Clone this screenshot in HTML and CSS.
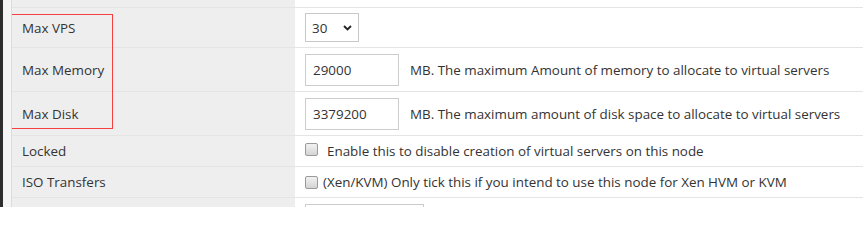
FILE: index.html
```html
<!DOCTYPE html>
<html>
<head>
<meta charset="utf-8">
<link rel="stylesheet" href="styles.css">
</head>
<body>
<div class="sidebar"></div>
<div class="gutter"></div>
<div class="table">
  <div class="row row-top"><div class="label"></div><div class="value"></div></div>
  <div class="row row-select">
    <div class="label">Max VPS</div>
    <div class="value">
      <div class="select"><span>30</span>
        <svg class="chev" width="9" height="6" viewBox="0 0 9 6"><path d="M1 1 L4.5 4.5 L8 1" fill="none" stroke="#222" stroke-width="1.8"/></svg>
      </div>
    </div>
  </div>
  <div class="row row-input">
    <div class="label">Max Memory</div>
    <div class="value"><div class="input">29000</div><span class="desc">MB. The maximum Amount of memory to allocate to virtual servers</span></div>
  </div>
  <div class="row row-input">
    <div class="label">Max Disk</div>
    <div class="value"><div class="input">3379200</div><span class="desc">MB. The maximum amount of disk space to allocate to virtual servers</span></div>
  </div>
  <div class="row row-check">
    <div class="label">Locked</div>
    <div class="value"><span class="check check-up"></span><span class="check-text wide">Enable this to disable creation of virtual servers on this node</span></div>
  </div>
  <div class="row row-check">
    <div class="label">ISO Transfers</div>
    <div class="value"><span class="check"></span><span class="check-text">(Xen/KVM) Only tick this if you intend to use this node for Xen HVM or KVM</span></div>
  </div>
  <div class="row row-last">
    <div class="label"></div>
    <div class="value last-value"><div class="input input-wide"></div></div>
  </div>
  <div class="highlight"></div>
</div>
</body>
</html>
```
FILE: styles.css
```css
html, body {
  margin: 0;
  padding: 0;
  height: 207px;
  overflow: hidden;
}
body {
  font-family: "Open Sans", "Noto Sans", sans-serif;
  font-size: 13.4px;
  color: #333;
  background: #fff;
  display: flex;
}
.sidebar {
  width: 3px;
  flex: none;
  background: #2e2e2e;
}
.gutter {
  width: 8px;
  flex: none;
  background: #f5f5f5;
  border-right: 1px solid #dcdcdc;
}
.table {
  flex: 1;
  position: relative;
  display: flex;
  flex-direction: column;
  overflow: hidden;
}
.row {
  display: grid;
  grid-template-columns: 283px 1fr;
  border-bottom: 1px solid #e4e4e4;
  box-sizing: border-box;
  flex: none;
}
.label {
  background: #eeeeee;
  padding-left: 10px;
  display: flex;
  align-items: center;
}
.value {
  padding-left: 10px;
  display: flex;
  align-items: center;
}
.row-top { height: 8px; }
.row-select { height: 40px; }
.row-input { height: 44px; }
.row-check { height: 31px; }
.row-last {
  flex: 1;
  min-height: 0;
  overflow: hidden;
  border-bottom: none;
}
.last-value {
  align-items: flex-start;
  padding-top: 6px;
}
.select {
  width: 54px;
  height: 29px;
  box-sizing: border-box;
  border: 1px solid #c8c8c8;
  display: flex;
  align-items: center;
  justify-content: space-between;
  padding: 0 6px 0 6px;
  background: #fff;
}
.chev {
  display: block;
}
.input {
  width: 94px;
  height: 32px;
  box-sizing: border-box;
  border: 1px solid #cccccc;
  padding-left: 7px;
  display: flex;
  align-items: center;
  background: #fff;
  flex: none;
}
.input-wide {
  width: 119px;
}
.desc {
  margin-left: 11px;
  white-space: nowrap;
}
.check {
  width: 13px;
  height: 13px;
  box-sizing: border-box;
  border: 1px solid #9a9a9a;
  border-radius: 2px;
  background: linear-gradient(#f2f2f2, #d4d4d4);
  flex: none;
}
.check-up {
  margin-top: -3px;
}
.check-text {
  margin-left: 5px;
  white-space: nowrap;
}
.check-text.wide {
  margin-left: 9px;
}
.highlight {
  position: absolute;
  left: -1px;
  top: 14px;
  width: 102px;
  height: 115px;
  box-sizing: border-box;
  border: 1px solid #f34040;
}
```
